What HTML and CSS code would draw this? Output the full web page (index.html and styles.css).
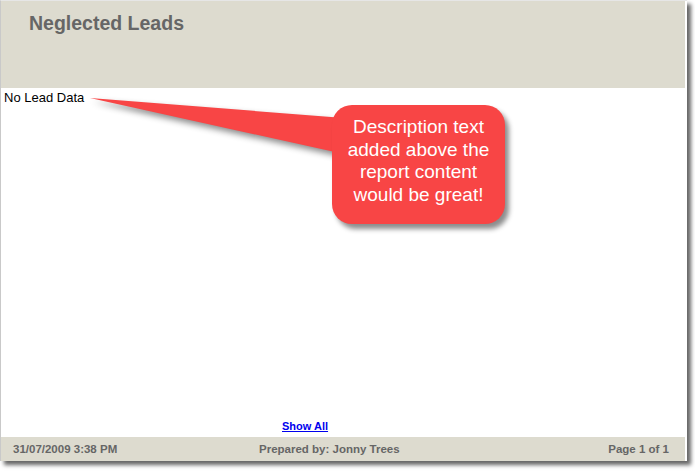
FILE: index.html
```html
<!DOCTYPE html>
<html>
<head>
<meta charset="utf-8">
<link rel="stylesheet" href="styles.css">
</head>
<body>
<div class="page">
  <div class="header">
    <h1 class="title">Neglected Leads</h1>
  </div>
  <div class="content">
    <div class="nodata">No Lead Data</div>
    <div class="showall"><a href="#">Show All</a></div>
  </div>
  <div class="footer">
    <span class="f-left">31/07/2009 3:38 PM</span>
    <span class="f-mid">Prepared by: Jonny Trees</span>
    <span class="f-right">Page 1 of 1</span>
  </div>
</div>
<svg class="pointer" width="260" height="70" viewBox="0 0 260 70">
  <polygon points="0,0 254,20 254,56" fill="#f84545"/>
</svg>
<div class="callout">Description text added above the report content would be great!</div>
</body>
</html>
```
FILE: styles.css
```css
html, body {
  margin: 0;
  padding: 0;
  background: #fff;
}
body {
  position: relative;
  width: 695px;
  height: 471px;
  overflow: hidden;
  font-family: "Liberation Sans", Arial, sans-serif;
}
.page {
  width: 686px;
  height: 460px;
  border-left: 1px solid #c9c9c9;
  border-top: 1px solid #e6e6e6;
  background: #fff;
  box-shadow: 4px 4px 4px rgba(0, 0, 0, 0.6);
  display: flex;
  flex-direction: column;
}
.header {
  height: 87px;
  margin-right: 2px;
  background: #dddbcf;
  box-sizing: border-box;
  padding: 11px 0 0 28px;
}
.title {
  margin: 0;
  font-size: 19.5px;
  font-weight: bold;
  color: #666666;
  line-height: 22px;
}
.content {
  flex: 1;
  display: flex;
  flex-direction: column;
  justify-content: space-between;
  padding: 2px 0 4px 3px;
}
.nodata {
  font-size: 13px;
  line-height: 15px;
  color: #000;
}
.showall {
  padding-left: 278px;
  font-size: 11px;
  line-height: 13px;
  font-weight: bold;
}
.showall a {
  color: #0000ee;
  text-decoration: underline;
}
.footer {
  height: 24px;
  margin-right: 2px;
  background: #dddbcf;
  display: grid;
  grid-template-columns: 246px 1fr auto;
  align-items: center;
  padding: 0 16px 0 12px;
  font-size: 11.5px;
  font-weight: bold;
  color: #666666;
}
.pointer {
  position: absolute;
  left: 90px;
  top: 98px;
  filter: drop-shadow(3px 4px 3px rgba(0, 0, 0, 0.45));
}
.callout {
  position: absolute;
  left: 332px;
  top: 105px;
  width: 173px;
  height: 119px;
  box-sizing: border-box;
  padding: 11px 6px 0;
  background: #f84545;
  border-radius: 20px;
  box-shadow: 4px 5px 5px rgba(0, 0, 0, 0.45);
  color: #fff;
  font-size: 19px;
  line-height: 22.5px;
  text-align: center;
}
```
